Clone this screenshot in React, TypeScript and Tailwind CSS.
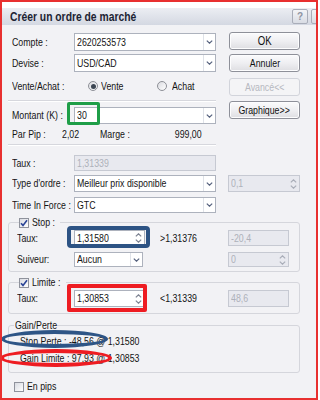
import React from "react";

const F = "font-['Liberation_Sans',Arial,sans-serif]";

function T({
  children,
  o = "l",
  className = "",
}: {
  children: React.ReactNode;
  o?: "l" | "c" | "r";
  className?: string;
}) {
  const origin = o === "l" ? "origin-left" : o === "c" ? "origin-center" : "origin-right";
  return <span className={`inline-block whitespace-nowrap scale-x-[0.8] ${origin} ${className}`}>{children}</span>;
}

function Chevron({ up = false, color = "#56627e" }: { up?: boolean; color?: string }) {
  return (
    <svg width="7" height="4" viewBox="0 0 7 4" className="block">
      <path
        d={up ? "M0.8 3.4 L3.5 0.8 L6.2 3.4" : "M0.8 0.6 L3.5 3.2 L6.2 0.6"}
        fill="none"
        stroke={color}
        strokeWidth="1.2"
      />
    </svg>
  );
}

function Sel({ value, w }: { value: string; w: string }) {
  return (
    <div className={`${w} h-full flex border border-[#adb2bd] bg-white`}>
      <div className="flex-1 flex items-center pl-[2px] overflow-hidden whitespace-nowrap">
        <T>{value}</T>
      </div>
      <div className="w-[12px] border-l border-[#dfe2e8] flex items-center justify-center">
        <Chevron />
      </div>
    </div>
  );
}

function Spin({ value, w, disabled = false }: { value: string; w: string; disabled?: boolean }) {
  return (
    <div
      className={`${w} h-full flex border ${
        disabled ? "border-[#c6c9d2] bg-[#e8e9ef] text-[#aeb1ba]" : "border-[#adb2bd] bg-white"
      }`}
    >
      <div className="flex-1 flex items-center pl-[2px] whitespace-nowrap">
        <T>{value}</T>
      </div>
      <div className="w-[11px] flex flex-col items-center justify-center gap-[2px]">
        <Chevron up color={disabled ? "#a9adb8" : "#7d8392"} />
        <Chevron color={disabled ? "#a9adb8" : "#7d8392"} />
      </div>
    </div>
  );
}

function Field({ value, w, disabled = false }: { value: string; w: string; disabled?: boolean }) {
  return (
    <div
      className={`${w} h-full flex items-center pl-[2px] border whitespace-nowrap ${
        disabled ? "border-[#c6c9d2] bg-[#e8e9ef] text-[#aeb1ba]" : "border-[#adb2bd] bg-white"
      }`}
    >
      <T>{value}</T>
    </div>
  );
}

function Btn({ children, disabled = false }: { children: React.ReactNode; disabled?: boolean }) {
  return (
    <div
      className={`h-[18px] w-full flex items-center justify-center rounded-[3px] border ${
        disabled
          ? "border-[#d2d4db] bg-[#f4f4f6] text-[#b6b8c0]"
          : "border-[#8e9099] bg-gradient-to-b from-[#fbfbfc] via-[#efeff2] to-[#dedee2] text-[#111] shadow-[inset_0_0_0_1px_#fdfdfe]"
      }`}
    >
      {children}
    </div>
  );
}

function Check({ checked = false }: { checked?: boolean }) {
  return (
    <div className="w-[10px] h-[10px] border border-[#8f929c] bg-gradient-to-br from-[#d9dbe2] to-white flex items-center justify-center">
      {checked && (
        <svg width="8" height="8" viewBox="0 0 8 8" className="block">
          <path d="M1 4.2 L3 6.4 L7 1.2" fill="none" stroke="#2b4597" strokeWidth="1.6" />
        </svg>
      )}
    </div>
  );
}

function Radio({ checked = false }: { checked?: boolean }) {
  return (
    <div className="w-[10px] h-[10px] rounded-full border border-[#8e9097] bg-gradient-to-br from-[#dadbe0] to-white flex items-center justify-center">
      {checked && <div className="w-[5px] h-[5px] rounded-full bg-[#3c4653]" />}
    </div>
  );
}

function Sep() {
  return <div className="w-[208px] h-[2px] border-t border-[#d6d7dd] border-b border-b-white" />;
}

export default function App() {
  return (
    <div className={`w-[318px] h-[400px] border-2 border-[#e8302f] bg-white overflow-hidden ${F} text-[11px] leading-none text-[#141414]`}>
      <div className="w-[328px] pt-[6px]">
        {/* Title bar */}
        <div className="h-[17px] flex items-center bg-gradient-to-b from-[#eceef3] to-[#d4d8e2]">
          <div className="flex-1 pl-[8px] text-[12px] font-bold text-[#1c2333]">
            <span className="inline-block whitespace-nowrap origin-left scale-x-[0.86]">Créer un ordre de marché</span>
          </div>
          <div className="w-[16px] h-[15px] rounded-[2px] border border-[#a9adb9] bg-gradient-to-b from-[#f3f4f7] to-[#d9dce4] flex items-center justify-center text-[10px] font-bold text-[#8e93a2]">
            ?
          </div>
          <div className="ml-[3px] mr-[3px] w-[16px] h-[15px] rounded-[2px] border border-[#a9adb9] bg-gradient-to-b from-[#f3f4f7] to-[#d9dce4] flex items-center justify-center text-[11px] font-bold text-[#8e93a2]">
            ×
          </div>
        </div>

        {/* Body */}
        <div className="bg-[#f2f2f5] h-[373px] pl-[6px]">
          {/* Top section */}
          <div className="flex items-start pt-[7px]">
            <div className="w-[208px] pt-[1px]">
              <div className="flex items-center h-[18px]">
                <div className="w-[66px] pl-[4px]">
                  <T>Compte :</T>
                </div>
                <Sel value="2620253573" w="w-[142px]" />
              </div>
              <div className="flex items-center h-[18px] mt-[3px]">
                <div className="w-[66px] pl-[4px]">
                  <T>Devise :</T>
                </div>
                <Sel value="USD/CAD" w="w-[142px]" />
              </div>
              <div className="flex items-center h-[18px] mt-[5px]">
                <div className="w-[80px] pl-[4px]">
                  <T>Vente/Achat :</T>
                </div>
                <div className="w-[69px] flex items-center">
                  <Radio checked />
                  <span className="ml-[3px]">
                    <T>Vente</T>
                  </span>
                </div>
                <div className="flex items-center">
                  <Radio />
                  <span className="ml-[5px]">
                    <T>Achat</T>
                  </span>
                </div>
              </div>
              <div className="mt-[5px]">
                <Sep />
              </div>
              <div className="flex items-center h-[17px] mt-[5px]">
                <div className="w-[66px] pl-[4px]">
                  <T>Montant (K) :</T>
                </div>
                <div className="relative h-full">
                  <Sel value="30" w="w-[142px]" />
                  <div className="absolute left-[-7px] top-[-5px] w-[33px] h-[23px] border-[3px] border-[#1f9e48] rounded-[2px]" />
                </div>
              </div>
              <div className="flex items-center h-[14px] mt-[3px]">
                <div className="w-[54px] pl-[4px]">
                  <T>Par Pip :</T>
                </div>
                <div className="w-[38px]">
                  <T>2,02</T>
                </div>
                <div>
                  <T>Marge :</T>
                </div>
                <div className="flex-1 text-right pr-[14px]">
                  <T o="r">999,00</T>
                </div>
              </div>
              <div className="mt-[3px]">
                <Sep />
              </div>
            </div>

            <div className="ml-[13px] w-[71px]">
              <Btn>
                <T o="c" className="text-[12px]">
                  OK
                </T>
              </Btn>
              <div className="mt-[4px]">
                <Btn>
                  <T o="c">Annuler</T>
                </Btn>
              </div>
              <div className="mt-[6px]">
                <Btn disabled>
                  <T o="c">Avancé&lt;&lt;</T>
                </Btn>
              </div>
              <div className="mt-[5px]">
                <Btn>
                  <T o="c">Graphique&gt;&gt;</T>
                </Btn>
              </div>
            </div>
          </div>

          {/* Middle rows */}
          <div className="flex items-center h-[16px] mt-[9px]">
            <div className="w-[66px] pl-[4px]">
              <T>Taux :</T>
            </div>
            <Field value="1,31339" w="w-[142px]" disabled />
          </div>
          <div className="flex items-center h-[17px] mt-[4px]">
            <div className="w-[66px] pl-[4px]">
              <T>Type d'ordre :</T>
            </div>
            <Sel value="Meilleur prix disponible" w="w-[142px]" />
            <div className="ml-[12px] h-full">
              <Spin value="0,1" w="w-[72px]" disabled />
            </div>
          </div>
          <div className="flex items-center h-[16px] mt-[5px]">
            <div className="w-[66px] pl-[4px]">
              <T>Time In Force :</T>
            </div>
            <Sel value="GTC" w="w-[142px]" />
          </div>

          {/* Stop group */}
          <div className="relative mt-[9px] w-[292px] h-[50px] border border-[#d5d6dc] rounded-[3px] pt-[7px]">
            <div className="absolute left-[10px] top-[-6px] flex items-center bg-[#f2f2f5] pr-[2px]">
              <Check checked />
              <span className="ml-[3px] w-[26px]">
                <T>Stop :</T>
              </span>
            </div>
            <div className="flex items-center h-[16px]">
              <div className="w-[65px] pl-[8px]">
                <T>Taux:</T>
              </div>
              <div className="relative h-full">
                <Spin value="1,31580" w="w-[71px]" />
                <div className="absolute left-[-7px] top-[-4px] w-[83px] h-[22px] border-[4px] border-[#2d5384] rounded-[4px]" />
              </div>
              <div className="w-[83px] pl-[15px]">
                <T>&gt;1,31376</T>
              </div>
              <Field value="-20,4" w="w-[61px]" disabled />
            </div>
            <div className="flex items-center h-[15px] mt-[6px]">
              <div className="w-[65px] pl-[8px]">
                <T>Suiveur:</T>
              </div>
              <div className="w-[71px] h-full">
                <Sel value="Aucun" w="w-[69px]" />
              </div>
              <div className="w-[83px]" />
              <Spin value="0" w="w-[61px]" disabled />
            </div>
          </div>

          {/* Limite group */}
          <div className="relative mt-[10px] w-[292px] h-[32px] border border-[#d5d6dc] rounded-[3px] pt-[7px]">
            <div className="absolute left-[10px] top-[-6px] flex items-center bg-[#f2f2f5] pr-[2px]">
              <Check checked />
              <span className="ml-[3px] w-[32px]">
                <T>Limite :</T>
              </span>
            </div>
            <div className="flex items-center h-[17px]">
              <div className="w-[65px] pl-[8px]">
                <T>Taux:</T>
              </div>
              <div className="relative h-full">
                <Spin value="1,30853" w="w-[71px]" />
                <div className="absolute left-[-7px] top-[-6px] w-[80px] h-[28px] border-[4px] border-[#ee1c22] rounded-[2px]" />
              </div>
              <div className="w-[83px] pl-[15px]">
                <T>&lt;1,31339</T>
              </div>
              <Field value="48,6" w="w-[61px]" disabled />
            </div>
          </div>

          {/* Gain/Perte group */}
          <div className="relative mt-[11px] w-[292px] h-[48px] border border-[#d5d6dc] rounded-[3px] pt-[7px]">
            <div className="absolute left-[5px] top-[-6px] bg-[#f2f2f5] px-[1px] w-[42px]">
              <T>Gain/Perte</T>
            </div>
            <div className="h-[17px] flex items-center pl-[11px]">
              <T>Stop Perte : -48,56 @ 1,31580</T>
            </div>
            <div className="h-[17px] flex items-center pl-[11px]">
              <T>Gain Limite : 97,93 @ 1,30853</T>
            </div>
            <div className="absolute left-[-8px] top-[4px] w-[107px] h-[18px] border-[4px] border-[#2e5586] rounded-[50%]" />
            <div className="absolute left-[-9px] top-[23px] w-[112px] h-[18px] border-[4px] border-[#ee1c22] rounded-[50%]" />
          </div>

          {/* En pips */}
          <div className="flex items-center h-[11px] mt-[8px] ml-[6px]">
            <Check />
            <span className="ml-[3px]">
              <T>En pips</T>
            </span>
          </div>
        </div>
      </div>
    </div>
  );
}
